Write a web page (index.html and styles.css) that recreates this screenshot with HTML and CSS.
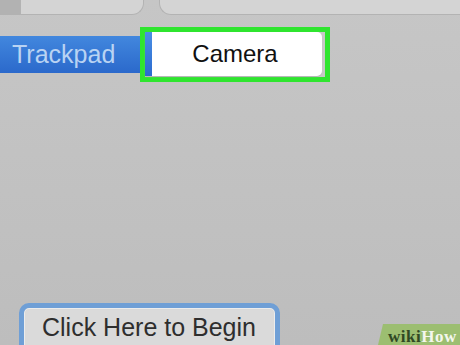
FILE: index.html
```html
<!DOCTYPE html>
<html lang="en">
<head>
    <meta charset="UTF-8">
    <meta name="viewport" content="width=device-width, initial-scale=1.0">
    <title>Camera</title>
    <link rel="stylesheet" href="styles.css">
</head>
<body>
    <div class="window">
        <div class="tab-strip">
            <div class="tab-edge"></div>
            <div class="tab"></div>
            <div class="tab tab-wide"></div>
        </div>

        <div class="segmented">
            <div class="seg seg-trackpad">Trackpad</div>
            <div class="seg-focus">
                <div class="seg seg-camera">
                    <span class="seg-sliver"></span>
                    <span class="seg-label">Camera</span>
                </div>
            </div>
        </div>

        <div class="start-area">
            <button class="start-button">Click Here to Begin</button>
        </div>

        <div class="watermark"><span class="wm-wiki">wiki</span><span class="wm-how">How</span></div>
    </div>
</body>
</html>
```

FILE: styles.css
```css
html, body {
    margin: 0;
    padding: 0;
}
body {
    width: 460px;
    height: 345px;
    overflow: hidden;
    background: #c3c3c3;
    font-family: "Liberation Sans", Arial, sans-serif;
}
.window {
    position: relative;
    height: 345px;
    background: linear-gradient(#c6c6c6, #bdbdbd);
}

/* tabs cut off at the top */
.tab-strip {
    display: flex;
    height: 15px;
    gap: 15px;
}
.tab-edge {
    width: 20px;
    background: #b2b2b2;
    margin-right: -15px;
}
.tab {
    width: 122px;
    background: #d4d4d4;
    border: 1px solid #b3b3b3;
    border-top: none;
    border-bottom-right-radius: 12px;
}
.tab-wide {
    flex: 1;
    border-bottom-right-radius: 0;
    border-bottom-left-radius: 12px;
    border-right: none;
}

/* segmented control */
.segmented {
    display: flex;
    align-items: center;
    margin-top: 12px;
}
.seg {
    height: 37px;
    display: flex;
    align-items: center;
    font-size: 24px;
}
.seg-trackpad {
    width: 128px;
    padding-left: 12px;
    background: linear-gradient(#4287de, #2b69cb);
    color: #b9d3f3;
    font-size: 25px;
}
.seg-focus {
    height: 45px;
    width: 177px;
    border: 5px solid #2fe52f;
    display: flex;
    align-items: stretch;
    padding-right: 3px;
    background: #c8c8c8;
}
.seg-camera {
    flex: 1;
    height: auto;
    background: #ffffff;
    border-radius: 0 5px 5px 0;
    box-shadow: 0 1px 1px #b5b5b5;
    margin-bottom: 1px;
    color: #111;
}
.seg-sliver {
    width: 7px;
    align-self: stretch;
    background: linear-gradient(#4a8fe4, #2b6bd0);
}
.seg-label {
    flex: 1;
    text-align: center;
    padding-right: 4px;
}

/* start button */
.start-area {
    margin-top: 221px;
    padding-left: 19px;
}
.start-button {
    font-family: "Liberation Sans", Arial, sans-serif;
    font-size: 25px;
    line-height: 30px;
    color: #2e2e2e;
    background: #dadada;
    border: 5px solid #6f9fd6;
    border-radius: 10px;
    box-shadow: inset 0 0 0 1px #ececec;
    padding: 4px 19px 10px 18px;
    margin: 0;
}

/* watermark */
.watermark {
    position: absolute;
    right: 0;
    bottom: 0;
    width: 72px;
    height: 21px;
    padding-left: 10px;
    background: rgba(150, 190, 100, 0.85);
    clip-path: polygon(5px 0, 100% 0, 100% 100%, 0 100%);
    font-family: "Liberation Serif", "Times New Roman", serif;
    font-weight: bold;
    font-size: 17px;
    line-height: 25px;
    letter-spacing: 0.5px;
}
.wm-wiki {
    color: #2f4824;
}
.wm-how {
    color: #f4f7ee;
}
```
